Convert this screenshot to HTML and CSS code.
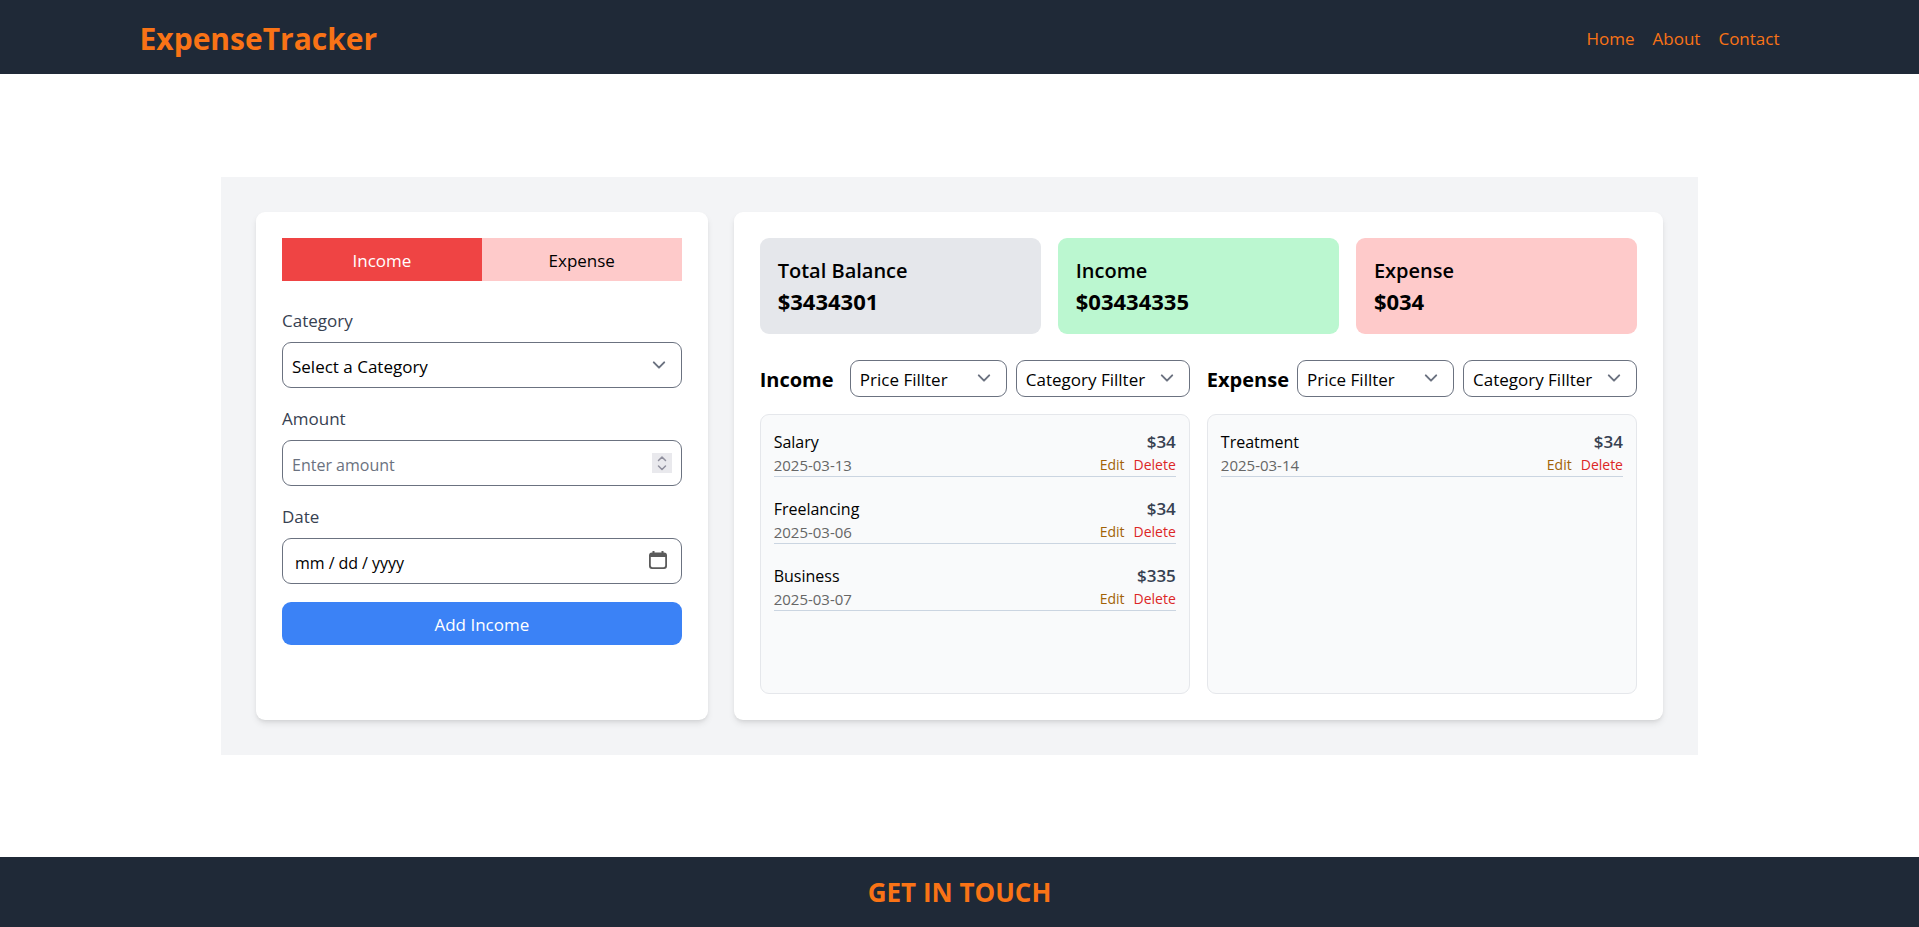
FILE: index.html
```html
<!DOCTYPE html>
<html lang="en">
<head>
<meta charset="utf-8">
<title>ExpenseTracker</title>
<link rel="stylesheet" href="styles.css">
</head>
<body>
<header class="site-header">
  <div class="header-inner">
    <h1 class="logo">ExpenseTracker</h1>
    <nav class="nav">
      <a href="#home">Home</a>
      <a href="#about">About</a>
      <a href="#contact">Contact</a>
    </nav>
  </div>
</header>
<main class="main">
  <div class="tracker">
    <section class="card">
      <div class="tabs">
        <button type="button" class="tab tab-active">Income</button>
        <button type="button" class="tab">Expense</button>
      </div>
      <form class="form">
        <div class="field">
          <label for="category">Category</label>
          <select id="category" class="control select">
            <option>Select a Category</option>
            <option>Salary</option>
            <option>Freelancing</option>
            <option>Business</option>
          </select>
        </div>
        <div class="field">
          <label for="amount">Amount</label>
          <input id="amount" class="control" type="number" placeholder="Enter amount">
        </div>
        <div class="field">
          <label for="date">Date</label>
          <input id="date" class="control" type="date">
        </div>
        <button type="button" class="submit">Add Income</button>
      </form>
    </section>
    <section class="card card-wide">
      <div class="summary">
        <div class="stat stat-balance"><h2>Total Balance</h2><p>$3434301</p></div>
        <div class="stat stat-income"><h2>Income</h2><p>$03434335</p></div>
        <div class="stat stat-expense"><h2>Expense</h2><p>$034</p></div>
      </div>
      <div class="lists">
        <section class="column">
          <div class="column-head">
            <h3>Income</h3>
            <div class="filters">
              <select class="select filter filter-price" aria-label="Income price filter"><option>Price Fillter</option></select>
              <select class="select filter filter-category" aria-label="Income category filter"><option>Category Fillter</option></select>
            </div>
          </div>
          <ul class="list">
            <li class="item">
              <div class="row"><span>Salary</span><strong class="price">$34</strong></div>
              <div class="row row-small"><span class="day">2025-03-13</span><span class="actions"><button type="button" class="edit">Edit</button><button type="button" class="delete">Delete</button></span></div>
            </li>
            <li class="item">
              <div class="row"><span>Freelancing</span><strong class="price">$34</strong></div>
              <div class="row row-small"><span class="day">2025-03-06</span><span class="actions"><button type="button" class="edit">Edit</button><button type="button" class="delete">Delete</button></span></div>
            </li>
            <li class="item">
              <div class="row"><span>Business</span><strong class="price">$335</strong></div>
              <div class="row row-small"><span class="day">2025-03-07</span><span class="actions"><button type="button" class="edit">Edit</button><button type="button" class="delete">Delete</button></span></div>
            </li>
          </ul>
        </section>
        <section class="column">
          <div class="column-head">
            <h3>Expense</h3>
            <div class="filters">
              <select class="select filter filter-price" aria-label="Expense price filter"><option>Price Fillter</option></select>
              <select class="select filter filter-category" aria-label="Expense category filter"><option>Category Fillter</option></select>
            </div>
          </div>
          <ul class="list">
            <li class="item">
              <div class="row"><span>Treatment</span><strong class="price">$34</strong></div>
              <div class="row row-small"><span class="day">2025-03-14</span><span class="actions"><button type="button" class="edit">Edit</button><button type="button" class="delete">Delete</button></span></div>
            </li>
          </ul>
        </section>
      </div>
    </section>
  </div>
</main>
<footer class="footer">
  <h2>GET IN TOUCH</h2>
</footer>
</body>
</html>
```
FILE: styles.css
```css
*, *::before, *::after { box-sizing: border-box; }

body {
  margin: 0;
  min-height: 100vh;
  display: flex;
  flex-direction: column;
  background: #fff;
  color: #000;
  font-family: "Open Sans", "Noto Sans", sans-serif;
  font-size: 17px;
  line-height: 26px;
}

h1, h2, h3, p, ul { margin: 0; padding: 0; }
ul { list-style: none; }
button, input, select { font: inherit; color: inherit; }
button { border: 0; cursor: pointer; }

.site-header { background: #1f2937; color: #f97316; padding: 19px 18px 15px; }
.header-inner {
  max-width: 1640px;
  margin: 0 auto;
  display: flex;
  justify-content: space-between;
  align-items: center;
}
.logo { font-size: 30px; line-height: 40px; font-weight: 700; }
.nav { display: flex; gap: 18px; }
.nav a { color: inherit; text-decoration: none; }

.main { flex: 1; display: flex; align-items: center; justify-content: center; }
.tracker {
  width: 100%;
  max-width: 1477px;
  padding: 35px;
  display: grid;
  grid-template-columns: repeat(3, minmax(0, 1fr));
  gap: 26px;
  background: #f3f4f6;
}
.card {
  padding: 26px;
  background: #fff;
  border-radius: 9px;
  box-shadow: 0 4px 7px -1px rgba(0, 0, 0, .1), 0 2px 4px -2px rgba(0, 0, 0, .1);
}
.card-wide { grid-column: span 2; }

.tabs { display: flex; margin-bottom: 27px; }
.tab { flex: 1; padding: 10px 9px 7px; background: #fecaca; color: #000; }
.tab-active { background: #ef4444; color: #fff; }

.form { display: flex; flex-direction: column; gap: 18px; }
.field { display: flex; flex-direction: column; gap: 8px; }
.field label { color: #374151; }
.control {
  width: 100%;
  height: 46px;
  padding: 4px 9px 0;
  border: 1px solid #6b7280;
  border-radius: 9px;
  background-color: #fff;
}
input.control { font-size: 16px; }
.control::placeholder { color: #6b7280; opacity: 1; }
.submit { padding: 10px 9px 7px; border-radius: 9px; background: #3b82f6; color: #fff; }

.select {
  appearance: none;
  background: #fff url("data:image/svg+xml,%3Csvg xmlns='http://www.w3.org/2000/svg' fill='none' viewBox='0 0 20 20'%3E%3Cpath stroke='%236b7280' stroke-linecap='round' stroke-linejoin='round' stroke-width='1.5' d='M6 8l4 4 4-4'/%3E%3C/svg%3E") no-repeat right 9px center / 26px 26px;
}

input[type="number"]::-webkit-inner-spin-button {
  appearance: none;
  width: 20px;
  height: 20px;
  margin-bottom: 4px;
  opacity: 1;
  background: #e9e9ed url("data:image/svg+xml,%3Csvg xmlns='http://www.w3.org/2000/svg' fill='none' viewBox='0 0 20 20'%3E%3Cpath stroke='%238f8f9d' stroke-width='1.5' stroke-linecap='round' stroke-linejoin='round' d='M6.5 7.5L10 4l3.500 3.500M6.500 13L10 16.500l3.500-3.500'/%3E%3C/svg%3E") no-repeat center / 20px 20px;
}
input[type="date"]::-webkit-datetime-edit { padding: 0 2px; }
input[type="date"]::-webkit-datetime-edit-text { padding: 0 3px; }
input[type="date"]::-webkit-calendar-picker-indicator {
  width: 18px;
  height: 18px;
  margin-right: 5px;
  margin-bottom: 6px;
  padding: 0;
  background: url("data:image/svg+xml,%3Csvg xmlns='http://www.w3.org/2000/svg' viewBox='0 0 18 18'%3E%3Cpath fill='%235b5b5b' fill-rule='evenodd' d='M3.500 0H5.500v1.500h7V0H14.500v1.500h.5A3 3 0 0 1 18 4.500V15a3 3 0 0 1-3 3H3a3 3 0 0 1-3-3V4.500a3 3 0 0 1 3-3h.5zM1.800 6v8.500a1.700 1.700 0 0 0 1.700 1.700h11a1.700 1.700 0 0 0 1.700-1.700V6z'/%3E%3C/svg%3E") no-repeat center / 18px 18px;
}

.summary { display: grid; grid-template-columns: repeat(3, 1fr); gap: 17px; margin-bottom: 26px; }
.stat { padding: 18px; border-radius: 9px; }
.stat h2, .stat p { line-height: 30px; }
.stat h2 { font-size: 20px; font-weight: 600; }
.stat p { font-size: 22px; font-weight: 700; }
.stat-balance { background: #e5e7eb; }
.stat-income { background: #bbf7d0; }
.stat-expense { background: #fecaca; }

.lists { display: grid; grid-template-columns: repeat(2, minmax(0, 1fr)); gap: 17px; }
.column-head {
  display: flex;
  justify-content: space-between;
  align-items: center;
  margin-bottom: 17px;
}
.column-head h3 { padding-top: 4px; font-size: 20px; line-height: 30px; font-weight: 700; }
.filters { display: flex; gap: 9px; }
.filter { height: 37px; padding: 3px 9px 0; border: 1px solid #6b7280; border-radius: 9px; }
.filter-price { width: 157px; }
.filter-category { width: 174px; }

.list {
  display: flex;
  flex-direction: column;
  gap: 18px;
  min-height: 280px;
  padding: 13px;
  border: 1px solid #e5e7eb;
  border-radius: 9px;
  background: #f9fafb;
}
.item { border-bottom: 1px solid #cbd5e1; }
.row { display: flex; justify-content: space-between; padding-top: 2px; font-size: 16px; line-height: 24px; }
.row-small { padding-top: 0; font-size: 14px; line-height: 22px; }
.price { font-size: 17px; font-weight: 600; color: #374151; }
.day { font-size: 15px; color: #666; }
.actions { display: flex; gap: 9px; }
.actions button { padding: 0; background: none; }
.edit { color: #a16207; }
.delete { color: #dc2626; }

.footer { padding: 18px; background: #1f2937; color: #f97316; text-align: center; }
.footer h2 { font-size: 26px; line-height: 34px; font-weight: 700; }
```
